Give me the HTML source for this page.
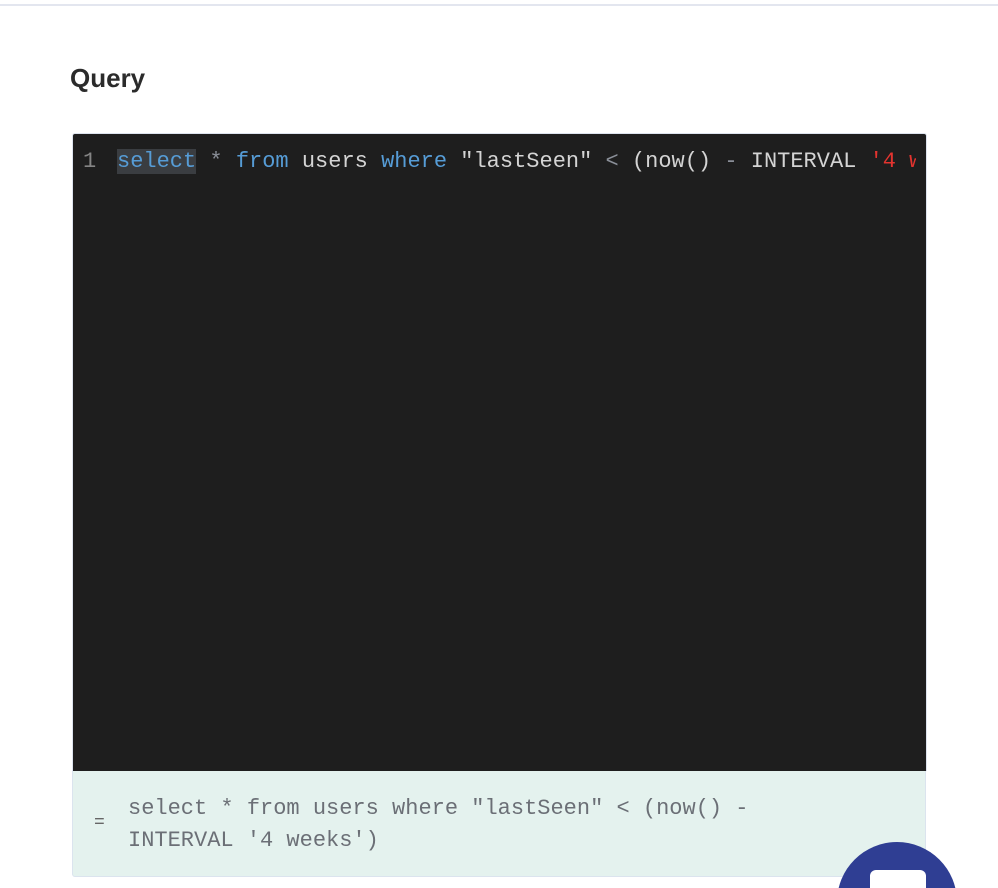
<!DOCTYPE html>
<html><head><style>
html,body{margin:0;padding:0;width:998px;height:888px;overflow:hidden;background:#fff;font-family:"Liberation Sans",sans-serif;}
#wrap{position:relative;width:998px;height:888px;overflow:hidden;}
.topline{position:absolute;left:0;top:4px;width:998px;height:2px;background:#e3e6ef;}
h2{position:absolute;left:70px;top:63px;margin:0;font-size:26px;font-weight:bold;color:#2b2b2b;}
.ed{position:absolute;left:72px;top:133px;width:853px;height:637px;background:#1e1e1e;border:1px solid #dde3ee;border-bottom:none;border-radius:3px 3px 0 0;overflow:hidden;}
.line{position:absolute;left:0;top:12px;height:32px;line-height:32px;font-family:"Liberation Mono",monospace;font-size:22px;color:#d4d4d4;white-space:pre;width:843px;overflow:hidden;}
.ln{color:#858585;display:inline-block;width:44px;text-align:left;padding-left:10px;box-sizing:border-box;}
.k{color:#569cd6}.sel{background:#3a3d41}.o{color:#8a8f98}.s{color:#e3342f}
.res{position:absolute;left:72px;top:771px;width:852px;height:105px;background:#e4f2ee;border:1px solid #dbe4ee;border-top:none;border-radius:0 0 3px 3px;}
.eq{position:absolute;left:21px;top:42px;font-family:"Liberation Mono",monospace;font-size:18px;color:#666;}
.rt{position:absolute;left:55px;top:22px;width:660px;font-family:"Liberation Mono",monospace;font-size:22px;line-height:32px;color:#6b6f76;}
.fab{position:absolute;left:837px;top:842px;width:120px;height:120px;border-radius:50%;background:#2f3e93;}
.sq{position:absolute;left:870px;top:870px;width:56px;height:40px;border-radius:6px;background:#fff;}
</style></head><body><div id="wrap">
<div class="topline"></div>
<h2>Query</h2>
<div class="ed"><div class="line"><span class="ln">1</span><span class="k sel">select</span> <span class="o">*</span> <span class="k">from</span> users <span class="k">where</span> "lastSeen" <span class="o">&lt;</span> (now() <span class="o">-</span> INTERVAL <span class="s">'4 weeks'</span>)</div></div>
<div class="res"><div class="eq">=</div><div class="rt">select * from users where "lastSeen" &lt; (now() - INTERVAL '4 weeks')</div></div>
<div class="fab"></div><div class="sq"></div>
</div></body></html>
